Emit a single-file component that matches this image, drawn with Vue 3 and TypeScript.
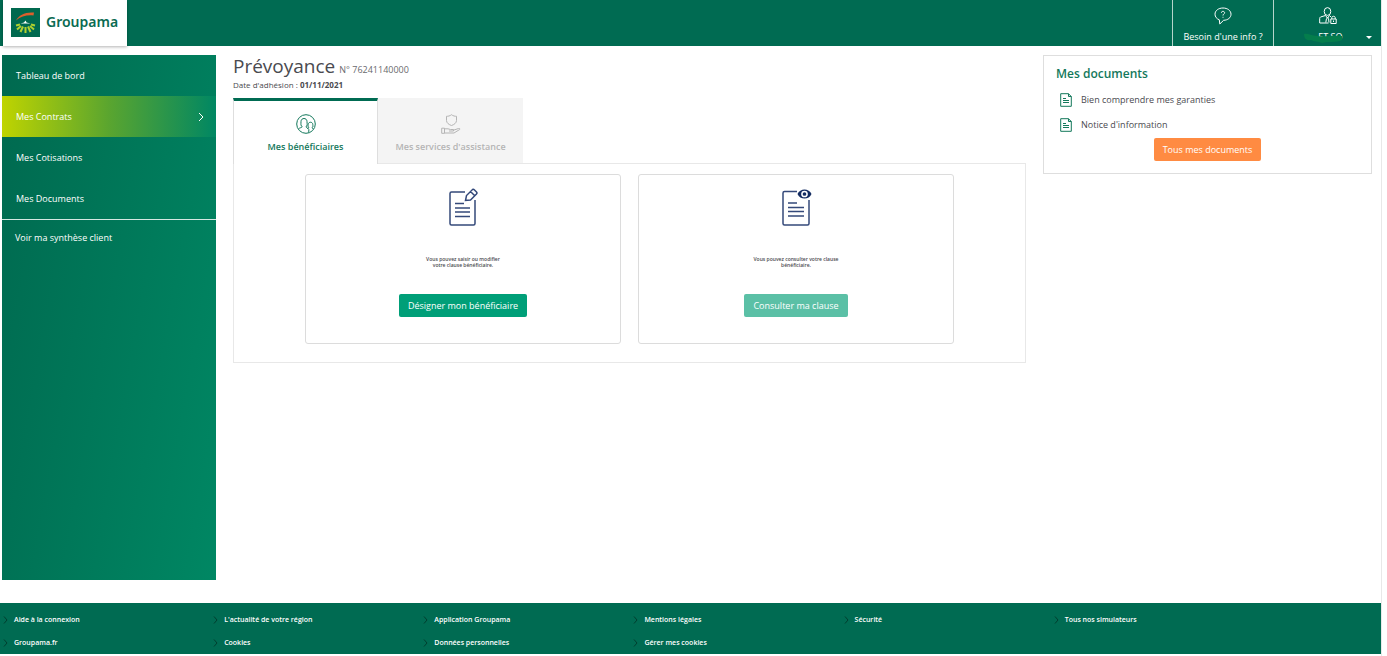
<script setup lang="ts">
interface NavItem {
  label: string
  active?: boolean
}

const navItems: NavItem[] = [
  { label: 'Tableau de bord' },
  { label: 'Mes Contrats', active: true },
  { label: 'Mes Cotisations' },
  { label: 'Mes Documents' },
]

const documents: string[] = ['Bien comprendre mes garanties', "Notice d'information"]

const footerLinks: string[] = [
  'Aide à la connexion',
  "L'actualité de votre région",
  'Application Groupama',
  'Mentions légales',
  'Sécurité',
  'Tous nos simulateurs',
  'Groupama.fr',
  'Cookies',
  'Données personnelles',
  'Gérer mes cookies',
]
</script>

<template>
  <div class="page">
    <header class="topbar">
      <a class="brand" href="#">
        <svg class="brand-mark" viewBox="0 0 29 29" aria-hidden="true">
          <rect width="29" height="29" fill="#00694f" />
          <path d="M5 12.500C8 7 14 3.800 23 4.500L22.500 7.500C16 6.800 10 8.300 5 12.500Z" fill="#dd5f2c" />
          <path d="M9.500 15.500L13 14.500L14.500 12.500L15.500 14.500L19.500 15.500Z" fill="#fff" />
          <g stroke="#b0d030" stroke-width="2" fill="none">
            <path d="M9 16.500L5 17.500" />
            <path d="M10 18L6 21.500" />
            <path d="M12 18.500L9.500 24" />
            <path d="M14.500 19V25" />
            <path d="M17 18.500L19.500 24" />
            <path d="M19 18L23 21.500" />
            <path d="M20 16.500L24 17.500" />
          </g>
        </svg>
        <span class="brand-name">Groupama</span>
      </a>
      <div class="top-actions">
        <button class="top-action help" type="button">
          <svg class="top-icon" viewBox="0 0 18 18" aria-hidden="true">
            <path d="M9 1C4.500 1 1 3.600 1 7.200C1 9.800 2.700 11.900 5.300 12.800L5.800 17L9.600 13.300C13.800 13.200 17 10.700 17 7.200C17 3.600 13.500 1 9 1Z" />
            <path d="M7.400 5.700C7.400 3.900 10.600 3.900 10.600 5.800C10.600 7 9 7 9 8.500M9 9.800V10.700" />
          </svg>
          <span>Besoin d'une info ?</span>
        </button>
        <button class="top-action account" type="button" aria-label="Mon compte">
          <svg class="top-icon" viewBox="0 0 18 18" aria-hidden="true">
            <ellipse cx="8.500" cy="4.500" rx="3.300" ry="3.900" />
            <path d="M6.500 8.500L1.500 10Q.7 10.500 .7 11.500V16H9.500M6.500 8.500L8.500 11L10.500 8.500L12 10M7.500 11.500L6.800 15.500M9.500 11.500L10 15.500M7.500 11H9.800" />
            <path d="M11.800 12H17.200V16.500H11.800ZM12.800 12V10.500C12.800 8.900 16.200 8.900 16.200 10.500V12M14.500 13.500V15" />
          </svg>
          <span class="account-name">
            ET SO
            <svg class="smudge" viewBox="0 0 40 10" aria-hidden="true">
              <path d="M1 1C5 0 8 3 14 3C22 4 30 2 39 3V7C33 10 25 8 19 10C15 8 11 9 8 7C4 8 1 6 1 1Z" />
            </svg>
          </span>
          <span class="caret"></span>
        </button>
      </div>
    </header>

    <div class="body">
      <nav class="sidebar">
        <a
          v-for="item in navItems"
          :key="item.label"
          class="nav-item"
          :class="{ active: item.active }"
          href="#"
        >
          <span>{{ item.label }}</span>
          <svg v-if="item.active" class="chevron" viewBox="0 0 6 10" aria-hidden="true">
            <path d="M1 1L5 5L1 9" />
          </svg>
        </a>
        <a class="nav-item secondary" href="#">Voir ma synthèse client</a>
      </nav>

      <main class="content">
        <h1 class="title">Prévoyance <small>N° 76241140000</small></h1>
        <p class="date">Date d'adhésion : <strong>01/11/2021</strong></p>

        <div class="tabs" role="tablist">
          <button class="tab selected" type="button" role="tab" aria-selected="true">
            <svg class="tab-icon" viewBox="0 0 20 20" aria-hidden="true">
              <circle cx="10" cy="10" r="9.300" />
              <path d="M2.500 15C3.500 13.500 6.200 13.800 6.200 12.500C4.500 12 5 10 5 7.500C5 3.500 11 3.500 11 7.500C11 10 11.800 12 10 12.500C10 13.800 12 14 12.800 15.500V18.500" />
              <path d="M11.500 14.500C12.500 14.200 13 14 13 13.500C11.500 13 12.200 12 12.200 10.500C12.200 7.500 16.800 7.500 16.800 10.500C16.800 12 17.500 13 16 13.500L17.200 15" />
            </svg>
            <span>Mes bénéficiaires</span>
          </button>
          <button class="tab" type="button" role="tab" aria-selected="false">
            <svg class="tab-icon" viewBox="0 0 20 20" aria-hidden="true">
              <path d="M10.500 .7C9 2 7 2.300 5.500 2.300V6.500C5.500 9 8 10.700 10.500 11.500C13 10.700 15.500 9 15.500 6.500V2.300C14 2.300 12 2 10.500 .7Z" />
              <path d="M.7 14.200H3.500V19.300H.7ZM3.500 14.800H7L9.500 15.500H12.500V17H8M12.500 16.200L17.500 14.500C19 14.300 19.500 15 18.500 15.600L13 19H3.500" />
            </svg>
            <span>Mes services d'assistance</span>
          </button>
        </div>

        <section class="panel">
          <article class="card">
            <svg class="card-icon" viewBox="0 0 36 40" aria-hidden="true">
              <path d="M20 4H6.500Q5 4 5 5.500V35.500Q5 37 6.500 37H28.500Q30 37 30 35.500V12" />
              <path d="M10 15.500H19M10 20H25M10 24H25M10 28.500H25" />
              <path d="M20.500 12.500L21.500 7.500L27.500 1.500Q28.500 1 29.500 2L31.500 4Q32.500 5 31.500 6L25.500 12ZM25.500 3.500L29.500 7.500" />
            </svg>
            <p class="card-text">Vous pouvez saisir ou modifier<br />votre clause bénéficiaire.</p>
            <button class="btn primary" type="button">Désigner mon bénéficiaire</button>
          </article>
          <article class="card">
            <svg class="card-icon" viewBox="0 0 36 40" aria-hidden="true">
              <path d="M19 3.500H6.500Q5 3.500 5 5V35.500Q5 37 6.500 37H29.500Q31 37 31 35.500V12" />
              <path d="M10 15H19M10 19.500H26M10 23.500H26M10 28H26" />
              <path class="eye" d="M19.500 6C22 0 31 0 33.500 6C31 12 22 12 19.500 6Z" />
              <circle class="iris" cx="26.500" cy="6" r="2.600" />
            </svg>
            <p class="card-text">Vous pouvez consulter votre clause<br />bénéficiaire.</p>
            <button class="btn muted" type="button">Consulter ma clause</button>
          </article>
        </section>
      </main>

      <aside class="documents">
        <h2>Mes documents</h2>
        <ul>
          <li v-for="doc in documents" :key="doc">
            <a href="#">
              <svg class="doc-icon" viewBox="0 0 12 14" aria-hidden="true">
                <path d="M.7 .7H8.500L11.300 3.500V13.300H.7ZM8.500 .7V3.500H11.300M3 5.500H6M3 7.500H9M3 9.500H9" />
              </svg>
              <span>{{ doc }}</span>
            </a>
          </li>
        </ul>
        <button class="btn orange" type="button">Tous mes documents</button>
      </aside>
    </div>

    <footer class="footer">
      <a v-for="link in footerLinks" :key="link" href="#">
        <svg viewBox="0 0 5 8" aria-hidden="true"><path d="M1 .5L4 4L1 7.500" /></svg>
        <span>{{ link }}</span>
      </a>
    </footer>
  </div>
</template>

<style>
body {
  margin: 0;
  background: #fff;
}
</style>

<style scoped>
.page {
  box-sizing: border-box;
  display: flex;
  flex-direction: column;
  min-height: 100vh;
  margin-right: 5px;
  padding-bottom: 2px;
  border-right: 1px solid #e8e8e8;
  font-family: "Open Sans", "Liberation Sans", sans-serif;
  font-size: 9px;
  line-height: 14px;
  color: #4a4a4f;
}

.page * {
  box-sizing: border-box;
}

a {
  color: inherit;
  text-decoration: none;
}

button {
  font: inherit;
  cursor: pointer;
}

svg {
  display: block;
  fill: none;
  stroke: currentColor;
}

.topbar {
  display: flex;
  justify-content: space-between;
  height: 46px;
  background: #006b52;
}

.brand {
  display: flex;
  align-items: center;
  gap: 6px;
  width: 124px;
  margin-left: 3px;
  padding: 0 0 2px 8px;
  background: #fff;
  color: #0a6b52;
  box-shadow: 0 1px 3px rgba(0, 0, 0, 0.3);
}

.brand-mark {
  width: 29px;
  height: 29px;
  stroke: none;
}

.brand-name {
  font-family: "Noto Sans", sans-serif;
  font-size: 14px;
  font-weight: 600;
  line-height: 20px;
}

.top-actions {
  display: flex;
}

.top-action {
  position: relative;
  display: flex;
  flex-direction: column;
  align-items: center;
  gap: 5px;
  padding: 7px 0 0;
  border: 0;
  border-left: 1px solid #b5d5cb;
  background: none;
  color: #fff;
}

.help {
  width: 101px;
}

.account {
  width: 108px;
}

.top-icon {
  width: 18px;
  height: 18px;
  stroke-width: 1;
}

.account-name {
  position: relative;
  width: 40px;
  margin-right: 10px;
  text-align: right;
}

.smudge {
  position: absolute;
  top: 3px;
  right: 0;
  width: 40px;
  height: 10px;
  fill: #047d4c;
  stroke: none;
}

.caret {
  position: absolute;
  right: 9px;
  bottom: 7px;
  border: 3px solid transparent;
  border-top-color: #fff;
  border-bottom: 0;
}

.body {
  display: flex;
  flex: 1;
  align-items: flex-start;
  gap: 17px;
  padding: 9px 9px 23px 2px;
}

.sidebar {
  align-self: stretch;
  flex: 0 0 214px;
  background: linear-gradient(100deg, #00694f, #008763);
  color: #fff;
}

.nav-item {
  display: flex;
  align-items: center;
  justify-content: space-between;
  height: 41px;
  padding: 0 12px 0 14px;
}

.nav-item.active {
  background: linear-gradient(90deg, #bfd400, #5aa52f 50%, #008763);
}

.nav-item.secondary {
  height: 36px;
  padding-left: 13px;
  border-top: 1px solid #d5e8e2;
}

.chevron {
  width: 6px;
  height: 10px;
}

.content {
  flex: 1;
  min-width: 0;
}

.title {
  display: flex;
  align-items: baseline;
  gap: 4px;
  height: 22px;
  margin: 0;
  font-size: 19px;
  font-weight: 400;
  line-height: 22px;
}

.title small {
  font-size: 9px;
  color: #6a6a6e;
}

.date {
  margin: 2px 0 8px;
  font-size: 8px;
  line-height: 11px;
}

.tabs {
  display: flex;
}

.tab {
  display: flex;
  flex-direction: column;
  align-items: center;
  gap: 6px;
  width: 145px;
  height: 65px;
  padding: 13px 0 0;
  border: 0;
  border-top: 3px solid #f4f4f4;
  background: #f4f4f4;
  color: #b4b4b4;
  font-weight: 600;
}

.tab.selected {
  position: relative;
  height: 66px;
  margin-bottom: -1px;
  border: 1px solid #dedede;
  border-width: 3px 1px 0;
  border-top-color: #006b52;
  background: #fff;
  color: #13785b;
}

.tab-icon {
  width: 20px;
  height: 20px;
}

.panel {
  display: flex;
  justify-content: center;
  gap: 17px;
  padding: 10px 71px 18px;
  border: 1px solid #e8e8e8;
}

.card {
  display: flex;
  flex: 1;
  flex-direction: column;
  align-items: center;
  height: 170px;
  padding-top: 13px;
  border: 1px solid #dcdcdc;
  border-radius: 3px;
}

.card-icon {
  width: 36px;
  height: 40px;
  color: #34497a;
  stroke-width: 1.500;
}

.eye {
  fill: #142c62;
  stroke: none;
}

.iris {
  stroke: #fff;
}

.card-text {
  margin: 28px 0 26px;
  font-size: 5px;
  line-height: 6px;
  font-weight: 600;
  text-align: center;
}

.btn {
  height: 23px;
  padding: 0 9px;
  border: 0;
  border-radius: 2px;
  color: #fff;
}

.primary {
  background: #009f78;
}

.muted {
  background: #5bc0a6;
}

.orange {
  background: #ff8b42;
}

.documents {
  display: flex;
  flex: 0 0 329px;
  flex-direction: column;
  align-items: center;
  padding: 10px 12px 12px;
  border: 1px solid #dedede;
}

.documents h2 {
  align-self: stretch;
  margin: 0;
  font-size: 12px;
  font-weight: 600;
  line-height: 16px;
  color: #13785b;
}

.documents ul {
  align-self: stretch;
  margin: 5px 0 1px;
  padding: 0 0 0 4px;
  list-style: none;
}

.documents li a {
  display: flex;
  align-items: center;
  gap: 9px;
  height: 25px;
}

.doc-icon {
  width: 12px;
  height: 14px;
  color: #13785b;
}

.footer {
  display: grid;
  grid-template-columns: repeat(6, 15.250%);
  padding: 5px 0 0 3px;
  background: #006b52;
  color: #fff;
  font-size: 7px;
  font-weight: 600;
}

.footer a {
  display: flex;
  align-items: center;
  gap: 6px;
  height: 23px;
}

.footer svg {
  width: 5px;
  height: 8px;
  color: #003f2f;
}
</style>
